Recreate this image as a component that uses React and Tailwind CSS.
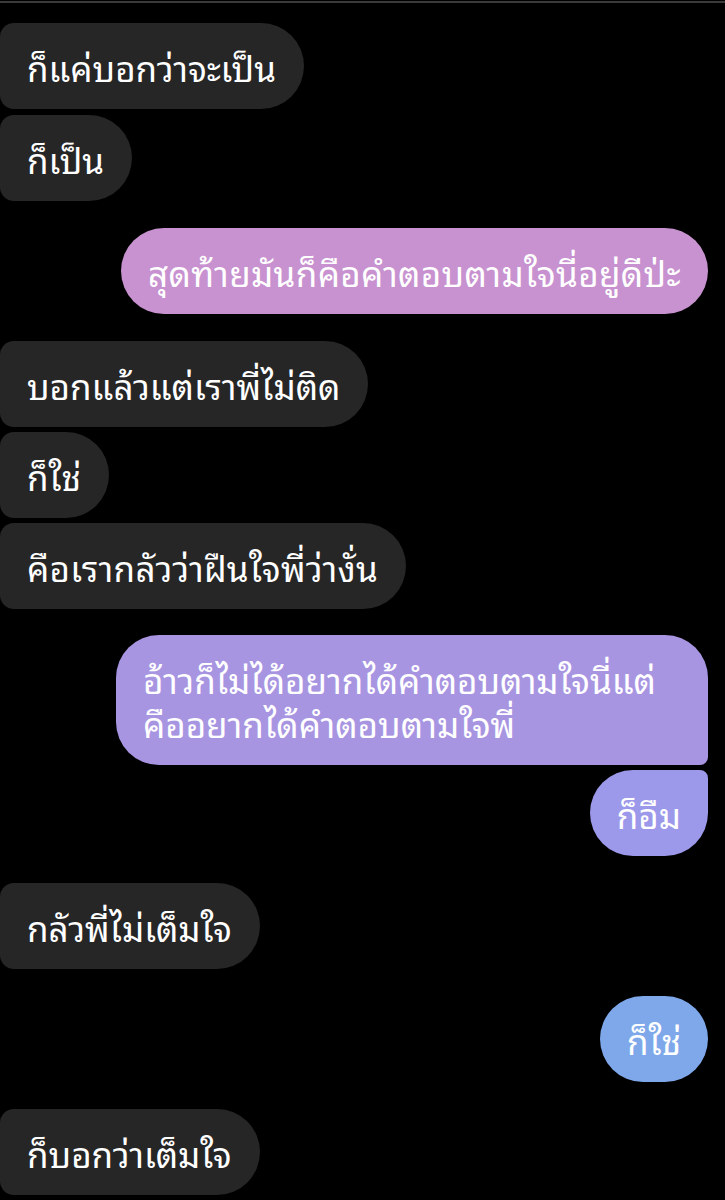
function Left({ text, className = '' }) {
  return (
    <div className="flex justify-start">
      <div className={`bg-[#262626] text-white pl-[27px] pr-[28px] py-[21px] rounded-r-[43px] rounded-l-[14px] ${className}`}>
        {text}
      </div>
    </div>
  );
}

function Right({ children, className = '' }) {
  return (
    <div className="flex justify-end pr-[17px]">
      <div className={`text-white px-[27px] py-[21px] ${className}`}>{children}</div>
    </div>
  );
}

export default function App() {
  return (
    <div className="w-[725px] h-[1200px] bg-black overflow-hidden font-['Noto_Sans_Thai_Looped',monospace] text-[35px] leading-[44px]">
      <div className="h-[2px] bg-[#3a3a3a] mt-[1px]" />
      <div className="flex flex-col pt-[20px]">
        <Left text="ก็แค่บอกว่าจะเป็น" />
        <div className="h-[6px]" />
        <Left text="ก็เป็น" />
        <div className="h-[27px]" />
        <Right className="bg-[#c792cf] rounded-[43px] tracking-[0.35px]">สุดท้ายมันก็คือคำตอบตามใจนี่อยู่ดีป่ะ</Right>
        <div className="h-[27px]" />
        <Left text="บอกแล้วแต่เราพี่ไม่ติด" />
        <div className="h-[5px]" />
        <Left text="ก็ใช่" />
        <div className="h-[5px]" />
        <Left text="คือเรากลัวว่าฝืนใจพี่ว่างั่น" className="tracking-[0.3px]" />
        <div className="h-[26px]" />
        <Right className="bg-[#a895e2] rounded-l-[43px] rounded-tr-[43px] rounded-br-[8px] w-[592px]">
          อ้าวก็ไม่ได้อยากได้คำตอบตามใจนี่แต่
          <br />
          คืออยากได้คำตอบตามใจพี่
        </Right>
        <div className="h-[5px]" />
        <Right className="bg-[#9c98ea] rounded-l-[43px] rounded-br-[43px] rounded-tr-[8px]">ก็อืม</Right>
        <div className="h-[27px]" />
        <Left text="กลัวพี่ไม่เต็มใจ" />
        <div className="h-[27px]" />
        <Right className="bg-[#7ea8ea] rounded-[43px]">ก็ใช่</Right>
        <div className="h-[27px]" />
        <Left text="ก็บอกว่าเต็มใจ" />
      </div>
    </div>
  );
}
